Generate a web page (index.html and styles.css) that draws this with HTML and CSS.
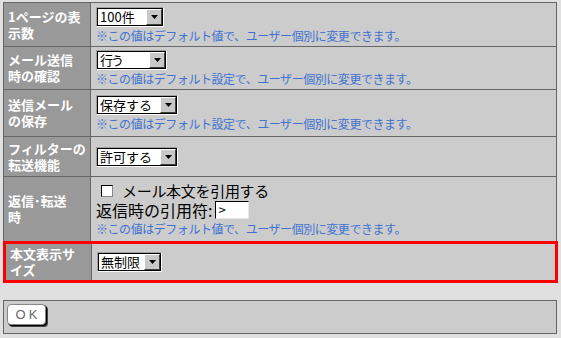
FILE: index.html
```html
<!DOCTYPE html>
<html lang="ja">
<head>
<meta charset="utf-8">
<title>設定</title>
<link rel="stylesheet" href="styles.css">
</head>
<body>
<div class="page">
  <div class="settings">
    <div class="row r1">
      <div class="label">1ページの表<br>示数</div>
      <div class="value">
        <span class="select w67"><span class="sel-text">100件</span><span class="sel-btn"><svg width="7" height="4" viewBox="0 0 7 4"><path d="M0 0H7L3.5 4Z" fill="#000"/></svg></span></span>
        <div class="note">※この値はデフォルト値で、ユーザー個別に変更できます。</div>
      </div>
    </div>
    <div class="row r2">
      <div class="label">メール送信<br>時の確認</div>
      <div class="value">
        <span class="select w70"><span class="sel-text narrow">行う</span><span class="sel-btn"><svg width="7" height="4" viewBox="0 0 7 4"><path d="M0 0H7L3.5 4Z" fill="#000"/></svg></span></span>
        <div class="note">※この値はデフォルト設定で、ユーザー個別に変更できます。</div>
      </div>
    </div>
    <div class="row r3">
      <div class="label">送信メール<br>の保存</div>
      <div class="value">
        <span class="select w81"><span class="sel-text">保存する</span><span class="sel-btn"><svg width="7" height="4" viewBox="0 0 7 4"><path d="M0 0H7L3.5 4Z" fill="#000"/></svg></span></span>
        <div class="note">※この値はデフォルト設定で、ユーザー個別に変更できます。</div>
      </div>
    </div>
    <div class="row r4">
      <div class="label">フィルターの<br>転送機能</div>
      <div class="value">
        <span class="select w81"><span class="sel-text">許可する</span><span class="sel-btn"><svg width="7" height="4" viewBox="0 0 7 4"><path d="M0 0H7L3.5 4Z" fill="#000"/></svg></span></span>
      </div>
    </div>
    <div class="row r5">
      <div class="label">返信･転送<br>時</div>
      <div class="value">
        <div class="check-line"><span class="checkbox"></span><span class="check-text">メール本文を引用する</span></div>
        <div class="quote-line"><span class="quote-text">返信時の引用符:</span><span class="textbox">&gt;</span></div>
        <div class="note">※この値はデフォルト値で、ユーザー個別に変更できます。</div>
      </div>
    </div>
    <div class="row r6 highlight">
      <div class="label">本文表示サ<br>イズ</div>
      <div class="value">
        <span class="select w64"><span class="sel-text">無制限</span><span class="sel-btn"><svg width="7" height="4" viewBox="0 0 7 4"><path d="M0 0H7L3.5 4Z" fill="#000"/></svg></span></span>
      </div>
    </div>
  </div>
  <div class="actions">
    <span class="ok-btn">OK</span>
  </div>
</div>
</body>
</html>
```

FILE: styles.css
```css
html, body {
  margin: 0;
  padding: 0;
  background: #e0e0e0;
}

body {
  font-family: "Noto Sans CJK JP", "Noto Sans", sans-serif;
  color: #000;
}

.page {
  padding: 2px 4px 0 3px;
}

.settings {
  border: 1px solid #666;
  border-bottom: none;
  background: #ccc;
}

.row {
  display: flex;
  border-bottom: 1px solid #666;
}

.r1 { height: 43px; }
.r2 { height: 42px; }
.r3 { height: 46px; }
.r4 { height: 39px; }
.r5 { height: 64px; }

.label {
  width: 82px;
  flex: none;
  background: #999;
  border-right: 1px solid #666;
  color: #fff;
  font-weight: bold;
  font-size: 13px;
  line-height: 16px;
  padding: 0 0 0 4px;
  display: flex;
  align-items: center;
  white-space: nowrap;
}

.value {
  flex: 1;
  padding-left: 5px;
  display: flex;
  flex-direction: column;
  justify-content: center;
  align-items: flex-start;
}

.highlight {
  height: 42px;
  box-sizing: border-box;
  border: 3px solid #ff0000;
  margin: -1px -2px 0 -1px;
}

.highlight .label {
  width: 81px;
}

.note {
  font-size: 12px;
  line-height: 14px;
  letter-spacing: -0.45px;
  color: #3f72d0;
  margin-top: 2px;
  white-space: nowrap;
}

.select {
  display: inline-flex;
  align-items: stretch;
  box-sizing: border-box;
  height: 20px;
  border: 1px solid #fff;
  border-top-color: #a0a0a0;
  border-left-color: #a0a0a0;
  background: #fff;
  box-shadow: inset 1px 1px 0 #000, inset -1px -1px 0 #000;
  padding: 1px;
}

.w67 { width: 68px; }
.w70 { width: 71px; }
.w81 { width: 82px; }
.w64 { width: 65px; }

.sel-text {
  flex: 1;
  font-size: 13px;
  line-height: 16px;
  padding-left: 2px;
  white-space: nowrap;
}

.sel-text.narrow {
  letter-spacing: -2px;
}

.sel-btn {
  width: 16px;
  flex: none;
  box-sizing: border-box;
  background: #c8c8c8;
  border: 1px solid;
  border-color: #fff #404040 #404040 #fff;
  display: flex;
  align-items: center;
  justify-content: center;
}

.check-line {
  display: flex;
  align-items: center;
  height: 18px;
}

.checkbox {
  width: 10px;
  height: 10px;
  margin: 0 9px 0 5px;
  background: #fff;
  border: 1px solid #000;
  border-right-color: #888;
  border-bottom-color: #888;
}

.check-text {
  font-size: 15px;
  line-height: 18px;
  letter-spacing: -0.3px;
}

.quote-line {
  display: flex;
  align-items: center;
  height: 20px;
}

.quote-text {
  font-size: 16px;
  line-height: 20px;
  margin-right: 3px;
}

.textbox {
  box-sizing: border-box;
  width: 34px;
  height: 18px;
  background: #fff;
  border: 1px solid #000;
  border-right-color: #e8e8e8;
  border-bottom-color: #e8e8e8;
  font-size: 13px;
  line-height: 15px;
  padding-left: 2px;
}

.actions {
  margin-top: 17px;
  height: 32px;
  border: 1px solid #666;
  background: #ccc;
  padding: 0;
  display: flex;
  align-items: flex-start;
}

.ok-btn {
  margin: 3px 0 0 3px;
  box-sizing: border-box;
  width: 39px;
  height: 21px;
  background: #fff;
  border: 1px solid #888;
  border-radius: 4px;
  box-shadow: 1px 1px 0 #000, 2px 2px 0 #444;
  font-family: "Liberation Sans", sans-serif;
  font-size: 13px;
  line-height: 19px;
  letter-spacing: 3px;
  color: #666;
  text-align: center;
  padding-left: 3px;
}
```
